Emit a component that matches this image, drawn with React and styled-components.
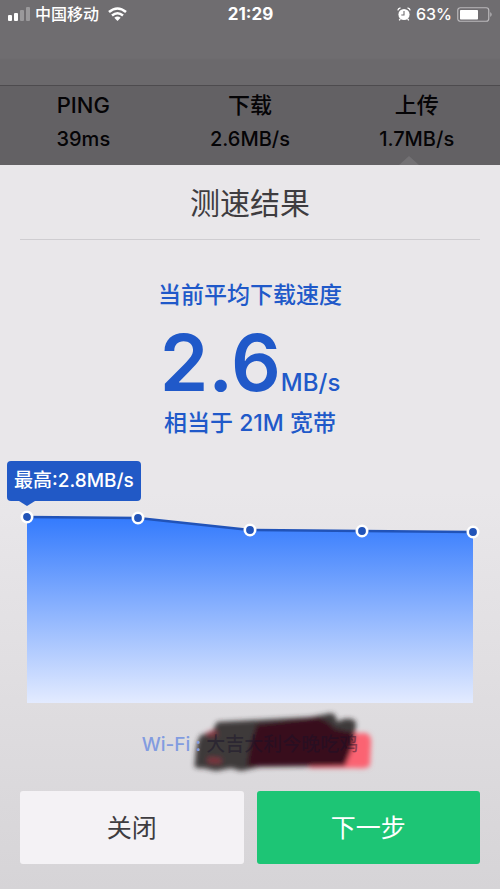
import React from "react";
import styled, { createGlobalStyle } from "styled-components";

const GlobalStyle = createGlobalStyle`
  * { box-sizing: border-box; }
  body { margin: 0; background: #d7d5d8; }
  #root { min-height: 100vh; display: flex; flex-direction: column; }
`;

const Screen = styled.main`
  flex: 1;
  display: flex;
  flex-direction: column;
  font-family: Inter, "Noto Sans CJK SC", sans-serif;
  font-weight: 500;
  color: #050406;
`;

const TopBar = styled.header`
  height: 86px;
  background: linear-gradient(#6f6d70 0 58px, #6b696c 60px 100%);
  border-bottom: 1px solid #4d4b4e;
`;

const StatusBar = styled.div`
  display: grid;
  grid-template-columns: 1fr auto 1fr;
  align-items: center;
  height: 28px;
  padding: 0 7px 0 8px;
  color: #fff;
  font-size: 16px;
  line-height: 20px;
`;

const StatusGroup = styled.div`
  display: flex;
  align-items: center;
  justify-content: ${(p) => (p.$end ? "flex-end" : "flex-start")};
  gap: 5px;
`;

const Carrier = styled.span`
  padding-right: 4px;
`;

const Clock = styled.time`
  font-weight: 700;
  font-size: 17px;
`;

const Icon = styled.svg`
  display: block;
  flex: none;
`;

const Metrics = styled.dl`
  display: grid;
  grid-template-columns: repeat(3, 1fr);
  height: 79px;
  margin: 0;
  padding-top: 3px;
  background: #636164;
  text-align: center;
`;

const Metric = styled.div`
  position: relative;
`;

const MetricName = styled.dt`
  font-size: 22px;
  line-height: 32px;
`;

const MetricValue = styled.dd`
  margin: 0;
  font-size: 20px;
  line-height: 36px;
`;

const ActiveMark = styled.span`
  position: absolute;
  left: calc(50% - 18px);
  bottom: 0;
  border: 10px solid transparent;
  border-top: 0;
  border-bottom: 9px solid #737174;
`;

const Panel = styled.section`
  flex: 1;
  display: flex;
  flex-direction: column;
  padding: 0 20px 25px;
  background: linear-gradient(#e9e7ea 0, #e9e7ea 45%, #d6d4d7 100%);
`;

const Title = styled.h1`
  margin: 0;
  height: 75px;
  border-bottom: 1px solid #cfcdd1;
  font-size: 30px;
  font-weight: 400;
  line-height: 76px;
  text-align: center;
  color: #3e3c40;
`;

const Summary = styled.div`
  display: flex;
  flex-direction: column;
  align-items: center;
  padding-top: 39px;
  color: #2059c9;
`;

const Caption = styled.p`
  margin: 0;
  font-size: 23px;
  line-height: 32px;
`;

const Speed = styled.p`
  display: flex;
  align-items: baseline;
  margin: 28px 0 0;
  font-size: 78px;
  font-weight: 600;
  line-height: 48px;
`;

const Unit = styled.span`
  font-size: 24px;
  font-weight: 500;
`;

const Chart = styled.figure`
  position: relative;
  margin: 70px 7px 0;
`;

const Plot = styled.svg`
  display: block;
  width: 100%;
  height: auto;
  overflow: visible;
`;

const Peak = styled.figcaption`
  position: absolute;
  left: -20px;
  bottom: calc(100% + 8px);
  height: 40px;
  padding: 0 7px;
  border-radius: 4px;
  background: #2159c6;
  color: #fff;
  font-size: 19px;
  line-height: 40px;
  white-space: nowrap;

  &::after {
    content: "";
    position: absolute;
    left: 12px;
    top: 100%;
    border: 8px solid transparent;
    border-top: 5px solid #2159c6;
    border-bottom: 0;
  }
`;

const Network = styled.p`
  position: relative;
  align-self: center;
  margin: 26px 0 0;
  font-size: 19px;
  line-height: 32px;
  white-space: nowrap;
`;

const NetworkText = styled.span`
  position: relative;
  z-index: 1;
  color: ${(p) => (p.$hidden ? "rgba(22, 16, 40, 0.45)" : "#829ce0")};
`;

const Scribble = styled.svg`
  position: absolute;
  right: -16px;
  top: -20px;
  overflow: visible;
`;

const Actions = styled.div`
  display: grid;
  grid-template-columns: 1fr 1fr;
  gap: 13px;
  margin-top: auto;
`;

const Button = styled.button`
  height: 73px;
  padding: 0 0 3px;
  border: 0;
  border-radius: 3px;
  background: ${(p) => (p.$primary ? "#1dc575" : "#f4f2f5")};
  color: ${(p) => (p.$primary ? "#fff" : "#3e3c40")};
  font: inherit;
  font-size: 25px;
  font-weight: 400;
`;

const metrics = [
  { name: "PING", value: "39ms" },
  { name: "下载", value: "2.6MB/s" },
  { name: "上传", value: "1.7MB/s", active: true },
];

const points = [
  [0, 8],
  [111, 9],
  [223, 21],
  [335, 22],
  [446, 23],
];
const line = points.map((p) => p.join(",")).join(" ");

function Signal() {
  return (
    <Icon width="22" height="14" viewBox="0 0 22 14" fill="#fff">
      <rect x="0" y="8" width="4" height="6" rx="1" />
      <rect x="6" y="6" width="4" height="8" rx="1" />
      <rect x="12" y="3" width="4" height="11" rx="1" opacity=".3" />
      <rect x="18" y="0" width="4" height="14" rx="1" opacity=".3" />
    </Icon>
  );
}

function Wifi() {
  return (
    <Icon width="19" height="14" viewBox="0 0 19 14" fill="none" stroke="#fff" strokeWidth="2.6">
      <path d="M1 5Q9.500 -2 18 5" />
      <path d="M4 8.500Q9.500 4 15 8.500" />
      <path d="M6.300 10.800Q9.500 8.200 12.700 10.800L9.500 14Z" fill="#fff" stroke="none" />
    </Icon>
  );
}

function Alarm() {
  return (
    <Icon width="14" height="14" viewBox="0 0 14 14" fill="none">
      <circle cx="7" cy="7.500" r="5.600" fill="#fff" />
      <path d="M.8 3.400Q1.200 1.300 3.500.9M10.500.9Q12.800 1.300 13.200 3.400M3.300 12L2.200 13.400M10.700 12L11.800 13.400" stroke="#fff" strokeWidth="1.300" />
      <path d="M7 4V8H4.300" stroke="#6f6d70" strokeWidth="1.100" />
    </Icon>
  );
}

function Battery() {
  return (
    <Icon width="36" height="15" viewBox="0 0 36 15">
      <rect x=".75" y=".75" width="31" height="13.500" rx="2.500" fill="none" stroke="#bab8bb" strokeWidth="1.200" />
      <rect x="3" y="3" width="18" height="9.500" rx=".8" fill="#fff" />
      <path d="M33.300 5Q36 7.500 33.300 10Z" fill="#bab8bb" />
    </Icon>
  );
}

function Redaction() {
  return (
    <Scribble width="185" height="64" viewBox="190 709 185 64" aria-hidden="true">
      <defs>
        <filter id="soft" x="-10%" y="-20%" width="120%" height="140%">
          <feGaussianBlur stdDeviation="2.4" />
        </filter>
      </defs>
      <g filter="url(#soft)">
        <path d="M335 734L366 733Q373 734 372 744L371 765Q369 769 358 768L310 768Z" fill="#fb6372" />
        <path d="M196 763Q193 769 204 768L217 771L232 768L242 771L260 767L345 766Q355 748 357 724Q357 718 345 719L338 722Q337 711 328 714L312 717L218 722L213 732L202 735Q197 740 196 763Z" fill="#2b2728" fillOpacity=".9" />
        <path d="M258 725L318 718Q330 721 335 729L354 733L355 743L346 766L248 766L252 744Z" fill="#37101a" />
        <path d="M208 734L218 733M209 760L222 761" stroke="#9c3041" strokeWidth="5" opacity=".7" />
      </g>
    </Scribble>
  );
}

export default function App() {
  return (
    <Screen>
      <GlobalStyle />
      <TopBar>
        <StatusBar>
          <StatusGroup>
            <Signal />
            <Carrier>中国移动</Carrier>
            <Wifi />
          </StatusGroup>
          <Clock>21:29</Clock>
          <StatusGroup $end>
            <Alarm />
            <span>63%</span>
            <Battery />
          </StatusGroup>
        </StatusBar>
      </TopBar>
      <Metrics>
        {metrics.map((m) => (
          <Metric key={m.name}>
            <MetricName>{m.name}</MetricName>
            <MetricValue>{m.value}</MetricValue>
            {m.active && <ActiveMark />}
          </Metric>
        ))}
      </Metrics>
      <Panel>
        <Title>测速结果</Title>
        <Summary>
          <Caption>当前平均下载速度</Caption>
          <Speed>
            2.6<Unit>MB/s</Unit>
          </Speed>
          <Caption>相当于 21M 宽带</Caption>
        </Summary>
        <Chart>
          <Plot viewBox="0 0 446 194" role="img" aria-label="下载速度">
            <defs>
              <linearGradient id="area" x1="0" y1="0" x2="0" y2="1">
                <stop offset="0" stopColor="#337afd" />
                <stop offset="1" stopColor="#e3ebff" />
              </linearGradient>
            </defs>
            <polygon points={`${line} 446,194 0,194`} fill="url(#area)" />
            <polyline points={line} fill="none" stroke="#2153b8" strokeWidth="2.500" />
            {points.map(([x, y]) => (
              <circle key={x} cx={x} cy={y} r="5.200" fill="#2254b8" stroke="#fff" strokeWidth="2.600" />
            ))}
          </Plot>
          <Peak>最高:2.8MB/s</Peak>
        </Chart>
        <Network>
          <NetworkText>Wi-Fi : </NetworkText>
          <NetworkText $hidden>大吉大利今晚吃鸡</NetworkText>
          <Redaction />
        </Network>
        <Actions>
          <Button type="button">关闭</Button>
          <Button type="button" $primary>
            下一步
          </Button>
        </Actions>
      </Panel>
    </Screen>
  );
}
